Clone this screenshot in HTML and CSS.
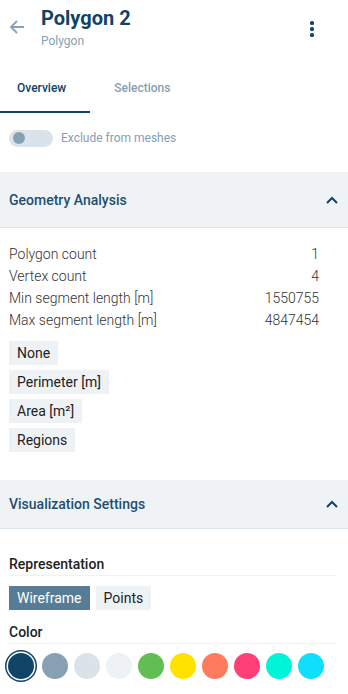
FILE: index.html
```html
<!DOCTYPE html>
<html lang="en">
<head>
    <meta charset="UTF-8">
    <meta name="viewport" content="width=device-width, initial-scale=1.0">
    <title>Polygon 2</title>
    <link rel="stylesheet" href="styles.css">
</head>
<body>
    <div class="panel">
        <!-- Top bar -->
        <div class="topbar">
            <svg class="back" width="16" height="16" viewBox="0 0 16 16">
                <path d="M15 8H2M8 2L2 8l6 6" fill="none" stroke="#87a0b2" stroke-width="1.8"/>
            </svg>
            <div class="titles">
                <div class="title">Polygon 2</div>
                <div class="subtitle">Polygon</div>
            </div>
            <div class="kebab"><span></span><span></span><span></span></div>
        </div>

        <!-- Tabs -->
        <div class="tabs">
            <div class="tab active">Overview</div>
            <div class="tab">Selections</div>
        </div>

        <div class="toggle-row">
            <div class="toggle"><div class="knob"></div></div>
            <span>Exclude from meshes</span>
        </div>

        <!-- Geometry Analysis -->
        <div class="section-head tall">
            <span>Geometry Analysis</span>
            <svg width="12" height="8" viewBox="0 0 12 8"><path d="M1 7l5-5 5 5" fill="none" stroke="#0f4466" stroke-width="2"/></svg>
        </div>
        <div class="section-body">
            <div class="stats">
                <div class="stat"><span>Polygon count</span><span>1</span></div>
                <div class="stat"><span>Vertex count</span><span>4</span></div>
                <div class="stat"><span>Min segment length [m]</span><span>1550755</span></div>
                <div class="stat"><span>Max segment length [m]</span><span>4847454</span></div>
            </div>
            <div class="chips">
                <div class="chip">None</div>
                <div class="chip">Perimeter [m]</div>
                <div class="chip">Area [m²]</div>
                <div class="chip">Regions</div>
            </div>
        </div>

        <!-- Visualization Settings -->
        <div class="section-head">
            <span>Visualization Settings</span>
            <svg width="12" height="8" viewBox="0 0 12 8"><path d="M1 7l5-5 5 5" fill="none" stroke="#0f4466" stroke-width="2"/></svg>
        </div>
        <div class="section-body vis">
            <div class="label">Representation</div>
            <div class="buttons">
                <div class="chip selected">Wireframe</div>
                <div class="chip">Points</div>
            </div>
            <div class="label">Color</div>
            <div class="swatches">
                <div class="swatch current" style="background:#0f4466"></div>
                <div class="swatch" style="background:#87a0b2"></div>
                <div class="swatch" style="background:#dae3e9"></div>
                <div class="swatch" style="background:#eef2f5"></div>
                <div class="swatch" style="background:#61be52"></div>
                <div class="swatch" style="background:#ffe200"></div>
                <div class="swatch" style="background:#ff7a5e"></div>
                <div class="swatch" style="background:#ff3f78"></div>
                <div class="swatch" style="background:#00f5d8"></div>
                <div class="swatch" style="background:#0fdffc"></div>
            </div>
        </div>
    </div>
</body>
</html>
```

FILE: styles.css
```css
body {
    margin: 0;
    font-family: Roboto, "Liberation Sans", sans-serif;
    background-color: #ffffff;
    color: #222222;
}
.panel {
    width: 348px;
}
.topbar {
    display: flex;
    align-items: flex-start;
    height: 65px;
    padding: 6px 0 0 9px;
    box-sizing: border-box;
}
.back {
    margin-top: 13px;
}
.titles {
    margin-left: 16px;
    flex: 1;
}
.title {
    font-size: 20px;
    font-weight: 700;
    line-height: 24px;
    color: #0f4466;
}
.subtitle {
    font-size: 12px;
    line-height: 16px;
    margin-top: 3px;
    color: #87a0b2;
}
.kebab {
    display: flex;
    flex-direction: column;
    gap: 2.3px;
    margin: 15px 34px 0 0;
}
.kebab span {
    width: 3.7px;
    height: 3.7px;
    border-radius: 50%;
    background-color: #0f4466;
}
.tabs {
    display: flex;
    height: 48px;
}
.tab {
    padding: 0 24px;
    font-size: 12px;
    font-weight: 500;
    line-height: 46px;
    color: #87a0b2;
    border-bottom: 2px solid transparent;
}
.tab:first-child {
    padding-left: 17px;
}
.tab.active {
    color: #0f4466;
    border-bottom-color: #0f4466;
}
.toggle-row {
    display: flex;
    align-items: center;
    gap: 8px;
    height: 59px;
    padding: 0 9px 9px;
    box-sizing: border-box;
    font-size: 12px;
    color: #87a0b2;
}
.toggle {
    width: 44px;
    height: 17px;
    border-radius: 9px;
    background-color: #dae3e9;
    display: flex;
    align-items: center;
    padding-left: 4px;
    box-sizing: border-box;
}
.knob {
    width: 12px;
    height: 12px;
    border-radius: 50%;
    background-color: #87a0b2;
}
.section-head {
    display: flex;
    justify-content: space-between;
    align-items: center;
    height: 48px;
    padding: 0 10px 0 9px;
    background-color: #eff3f6;
    border-bottom: 1px solid #dae3e9;
    font-size: 14px;
    font-weight: 500;
    color: #1f4e6e;
}
.section-head.tall {
    height: 55px;
}
.section-body {
    padding: 15px 12px 28px 9px;
}
.stats {
    padding-right: 17px;
}
.stat {
    display: flex;
    justify-content: space-between;
    font-size: 14px;
    font-weight: 300;
    line-height: 22px;
    color: #333333;
}
.chips {
    display: flex;
    flex-direction: column;
    align-items: flex-start;
    gap: 5px;
    margin-top: 10px;
}
.chip {
    height: 24px;
    line-height: 24px;
    padding: 0 8px;
    font-size: 14px;
    background-color: #eef2f5;
    color: #222222;
}
.chip.selected {
    background-color: #567d95;
    color: #ffffff;
}
.vis {
    padding-top: 25px;
}
.label {
    font-size: 14px;
    font-weight: 500;
    line-height: 20px;
    padding-bottom: 1px;
    border-bottom: 1px solid #eef2f5;
    color: #222222;
}
.buttons {
    display: flex;
    gap: 6px;
    margin: 10px 0 12px;
}
.swatches {
    display: flex;
    gap: 6px;
    margin-top: 9px;
}
.swatch {
    width: 26px;
    height: 26px;
    border-radius: 50%;
}
.swatch.current {
    margin-left: -1px;
    margin-right: 1.5px;
    box-shadow: 0 0 0 1.5px #ffffff, 0 0 0 3px #0f4466;
}
```
